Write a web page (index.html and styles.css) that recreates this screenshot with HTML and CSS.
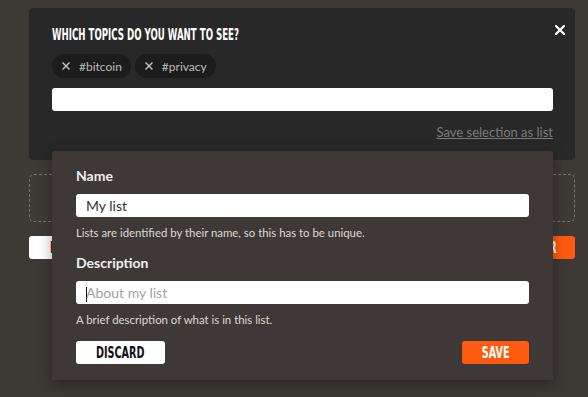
FILE: index.html
```html
<html>
  <head>
    <title>Topics</title>
    <meta name="viewport" content="width=device-width, initial-scale=1.0">
    <link rel="stylesheet" href="styles.css">
  </head>
  <body>
    <div class="page">
      <div class="topics">
        <button class="topics__close" aria-label="Close">
          <svg width="10" height="10" viewBox="0 0 10 10">
            <path d="M1 1 L9 9 M9 1 L1 9" stroke="#fff" stroke-width="2.2" stroke-linecap="square" />
          </svg>
        </button>
        <h2 class="topics__title"><span class="narrow narrow--left">Which topics do you want to see?</span></h2>
        <div class="chips">
          <span class="chip">
            <svg width="8" height="8" viewBox="0 0 8 8">
              <path d="M0.5 0.5 L7.5 7.5 M7.5 0.5 L0.5 7.5" stroke="#c8c8c8" stroke-width="1.4" />
            </svg>
            #bitcoin
          </span>
          <span class="chip">
            <svg width="8" height="8" viewBox="0 0 8 8">
              <path d="M0.5 0.5 L7.5 7.5 M7.5 0.5 L0.5 7.5" stroke="#c8c8c8" stroke-width="1.4" />
            </svg>
            #privacy
          </span>
        </div>
        <input class="topics__search" type="text" />
        <div class="topics__links">
          <a href="#" class="save-link">Save selection as list</a>
        </div>

        <div class="save-list">
          <label class="save-list__label">Name</label>
          <input class="save-list__input" type="text" value="My list" />
          <p class="save-list__help">Lists are identified by their name, so this has to be unique.</p>

          <label class="save-list__label save-list__label--spaced">Description</label>
          <div class="save-list__field">
            <input class="save-list__input" type="text" placeholder="About my list" />
          </div>
          <p class="save-list__help">A brief description of what is in this list.</p>

          <div class="save-list__actions">
            <button class="btn btn--white"><span class="narrow">Discard</span></button>
            <button class="btn btn--orange"><span class="narrow">Save</span></button>
          </div>
        </div>
      </div>

      <div class="dropzone"></div>

      <div class="row">
        <button class="btn btn--white btn--wide btn--red-text"><span class="narrow narrow--left">Discard</span></button>
        <button class="btn btn--orange btn--wide btn--end"><span class="narrow narrow--right">Apply filter</span></button>
      </div>
    </div>
  </body>
</html>
```

FILE: styles.css
```css
body {
  margin: 0;
  background-color: #3d3935;
  font-family: Lato, "Open Sans", sans-serif;
  color: #e8e6e3;
  height: 100vh;
  overflow: hidden;
}

.page {
  padding: 8px 13px 0 29px;
}

.narrow {
  display: inline-block;
  transform: scaleX(0.64);
  white-space: nowrap;
}
.narrow--left {
  transform-origin: left center;
}
.narrow--right {
  transform-origin: right center;
}

.topics {
  position: relative;
  background-color: #282828;
  border-radius: 4px;
  padding: 18px 22px 16px 23px;
  height: 152px;
  box-sizing: border-box;
}

.topics__close {
  position: absolute;
  top: 17px;
  right: 10px;
  padding: 0;
  border: none;
  background: transparent;
  cursor: pointer;
  line-height: 0;
}

.topics__title,
.btn {
  font-family: "DejaVu Sans Condensed", "DejaVu Sans", sans-serif;
  font-weight: bold;
  text-transform: uppercase;
}

.topics__title {
  margin: 0;
  font-size: 15px;
  line-height: 18px;
  color: #fff;
}

.chips {
  display: flex;
  gap: 4px;
  margin-top: 10px;
}

.chip {
  display: flex;
  align-items: center;
  gap: 9px;
  height: 24px;
  padding: 0 9px 0 10px;
  border-radius: 12px;
  background-color: #1c1c1c;
  color: #bdbdbd;
  font-size: 12px;
}

.topics__search {
  display: block;
  width: 100%;
  height: 23px;
  margin-top: 10px;
  border: none;
  border-radius: 3px;
  background: #fff;
  box-sizing: border-box;
}

.topics__links {
  text-align: right;
  margin-top: 13px;
  line-height: 17px;
}

.save-link {
  color: #7b7b7b;
  font-size: 13px;
  text-decoration: underline;
}

.save-list {
  position: absolute;
  z-index: 2;
  top: 143px;
  left: 23px;
  right: 22px;
  padding: 16px 24px;
  background-color: #3e3936;
  border-radius: 3px 3px 0 0;
  box-shadow: 0 4px 14px rgba(0, 0, 0, 0.35);
  display: flex;
  flex-direction: column;
}

.save-list__label {
  display: block;
  font-weight: bold;
  font-size: 14px;
  line-height: 17px;
  color: #f0eeec;
}

.save-list__label--spaced {
  margin-top: 14px;
}

.save-list__input {
  display: block;
  width: 100%;
  height: 23px;
  margin-top: 10px;
  padding: 0 10px;
  border: none;
  border-radius: 3px;
  background: #fff;
  box-sizing: border-box;
  font-family: Lato, sans-serif;
  font-size: 14px;
  color: #333;
}

.save-list__input::placeholder {
  color: #a3a3a3;
}

.save-list__field {
  position: relative;
}

.save-list__field::before {
  content: "";
  position: absolute;
  left: 10px;
  top: 16px;
  width: 1px;
  height: 15px;
  background: #111;
}

.save-list__help {
  margin: 9px 0 0;
  font-size: 11.4px;
  line-height: 14px;
  color: #ddd9d5;
}

.save-list__actions {
  display: flex;
  justify-content: space-between;
  margin-top: 14px;
}

.btn {
  height: 23px;
  border: none;
  border-radius: 3px;
  font-size: 16px;
  line-height: 23px;
  padding: 0;
  cursor: pointer;
  overflow: hidden;
}

.btn .narrow {
  transform: scaleX(0.67);
}
.btn .narrow--left {
  transform-origin: left center;
}
.btn .narrow--right {
  transform-origin: right center;
}

.btn--white {
  width: 89px;
  background: #fff;
  color: #111;
}

.btn--orange {
  width: 67px;
  background: #ff5a0f;
  color: #fff;
}

.btn--wide {
  width: 150px;
}

.btn--red-text {
  text-align: left;
  padding-left: 21px;
  color: #6a1010;
}

.btn--end {
  text-align: right;
  padding-right: 18px;
}

.dropzone {
  height: 48px;
  margin-top: 14px;
  border: 1px dashed #7a7572;
  border-radius: 5px;
  box-sizing: border-box;
}

.row {
  display: flex;
  justify-content: space-between;
  margin-top: 14px;
}
```
